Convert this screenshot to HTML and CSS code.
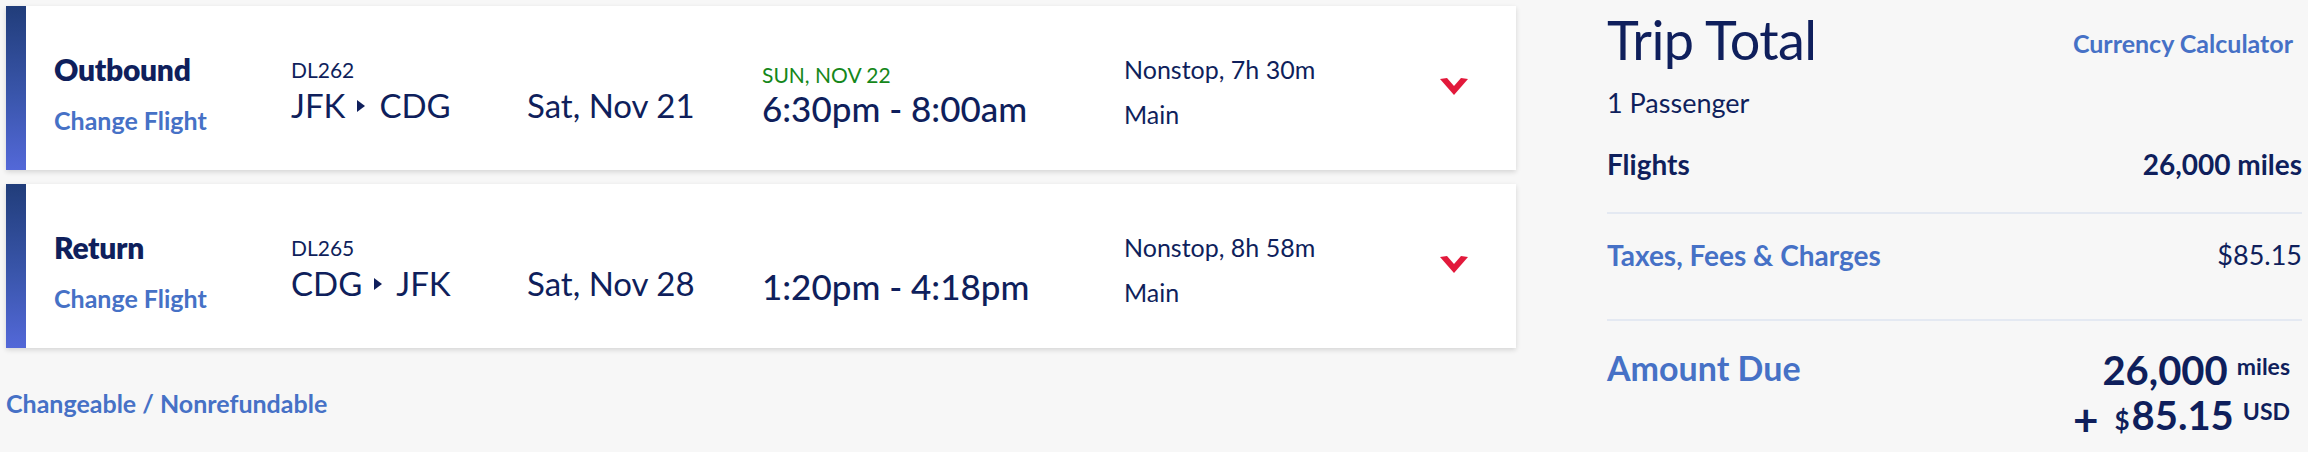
FILE: index.html
```html
<!DOCTYPE html>
<html lang="en">
<head>
<meta charset="utf-8">
<title>Trip Summary</title>
<link rel="stylesheet" href="styles.css">
</head>
<body>
<div class="page">
  <section class="itinerary">
    <article class="leg-card">
      <div class="leg-bar"></div>
      <div class="leg-label">
        <div class="leg-name">Outbound</div>
        <a class="leg-link">Change Flight</a>
      </div>
      <div class="leg-route">
        <div class="flight-no">DL262</div>
        <div class="route">JFK<svg class="route-arrow" width="8" height="12" viewBox="0 0 8 12"><polygon points="0,0 8,6 0,12"/></svg>CDG</div>
      </div>
      <div class="leg-date">
        <div class="date">Sat, Nov 21</div>
      </div>
      <div class="leg-time">
        <div class="arrival-note">SUN, NOV 22</div>
        <div class="time">6:30pm - 8:00am</div>
      </div>
      <div class="leg-info">
        <div class="stops">Nonstop, 7h 30m</div>
        <div class="cabin">Main</div>
      </div>
      <div class="leg-toggle">
        <svg width="28" height="17" viewBox="0 0 28 17"><polygon points="0,1 7,0 14,8 21,0 28,1 14,17"/></svg>
      </div>
    </article>

    <article class="leg-card">
      <div class="leg-bar"></div>
      <div class="leg-label">
        <div class="leg-name">Return</div>
        <a class="leg-link">Change Flight</a>
      </div>
      <div class="leg-route">
        <div class="flight-no">DL265</div>
        <div class="route">CDG<svg class="route-arrow" width="8" height="12" viewBox="0 0 8 12"><polygon points="0,0 8,6 0,12"/></svg>JFK</div>
      </div>
      <div class="leg-date">
        <div class="date">Sat, Nov 28</div>
      </div>
      <div class="leg-time">
        <div class="arrival-note"></div>
        <div class="time">1:20pm - 4:18pm</div>
      </div>
      <div class="leg-info">
        <div class="stops">Nonstop, 8h 58m</div>
        <div class="cabin">Main</div>
      </div>
      <div class="leg-toggle">
        <svg width="28" height="17" viewBox="0 0 28 17"><polygon points="0,1 7,0 14,8 21,0 28,1 14,17"/></svg>
      </div>
    </article>

    <a class="fare-rules">Changeable / Nonrefundable</a>
  </section>

  <aside class="summary">
    <header class="summary-head">
      <h2 class="summary-title">Trip Total</h2>
      <a class="summary-link">Currency Calculator</a>
    </header>
    <div class="passengers">1 Passenger</div>
    <div class="summary-row row-flights">
      <span class="row-label">Flights</span>
      <span class="row-value">26,000 miles</span>
    </div>
    <div class="summary-row row-taxes">
      <span class="row-label">Taxes, Fees &amp; Charges</span>
      <span class="row-value">$85.15</span>
    </div>
    <div class="summary-row row-due">
      <span class="row-label">Amount Due</span>
      <div class="due-value">
        <div class="due-line">26,000<span class="due-unit">miles</span></div>
        <div class="due-line"><span class="due-plus">+</span><span class="due-currency">$</span>85.15<span class="due-unit">USD</span></div>
      </div>
    </div>
  </aside>
</div>
</body>
</html>
```

FILE: styles.css
```css
* {
  box-sizing: border-box;
}

html, body {
  margin: 0;
  padding: 0;
  background: #f7f7f7;
}

body {
  font-family: "Lato", "Noto Sans", sans-serif;
  color: #0f1f5c;
  width: 2308px;
  height: 452px;
  overflow: hidden;
}

a {
  cursor: pointer;
}

.page {
  display: flex;
  padding: 6px;
  gap: 91px;
}

/* ---------- Itinerary ---------- */

.itinerary {
  width: 1510px;
  display: flex;
  flex-direction: column;
  gap: 14px;
}

.leg-card {
  display: grid;
  grid-template-columns: 20px 265px 236px 235px 362px 316px 28px;
  height: 164px;
  background: #ffffff;
  box-shadow: 0 2px 5px rgba(0, 0, 0, 0.14);
}

.leg-bar {
  background: linear-gradient(to bottom, #213d7a 0%, #3a56ac 55%, #5368d8 100%);
}

.leg-label {
  padding-left: 28px;
  padding-top: 45px;
}

.leg-name {
  font-size: 30px;
  line-height: 36px;
  font-weight: 800;
  letter-spacing: -0.3px;
}

.leg-link {
  display: block;
  margin-top: 18px;
  font-size: 25px;
  line-height: 30px;
  font-weight: 700;
  color: #4671c6;
}

.leg-route {
  padding-top: 51px;
}

.flight-no {
  font-size: 21px;
  line-height: 26px;
}

.route {
  margin-top: 2px;
  font-size: 33px;
  line-height: 40px;
  white-space: nowrap;
}

.route-arrow {
  fill: #0f1f5c;
  vertical-align: 6px;
  margin: 0 14px 0 12px;
}

.leg-date {
  padding-top: 79px;
}

.date {
  font-size: 33px;
  line-height: 40px;
  white-space: nowrap;
}

.leg-time {
  padding-top: 56px;
}

.arrival-note {
  height: 26px;
  font-size: 21px;
  line-height: 26px;
  color: #15871a;
}

.time {
  font-size: 35px;
  line-height: 40px;
  font-weight: 500;
  white-space: nowrap;
}

.leg-info {
  padding-top: 48px;
}

.stops {
  font-size: 25px;
  line-height: 30px;
  white-space: nowrap;
}

.cabin {
  margin-top: 15px;
  font-size: 25px;
  line-height: 30px;
}

.leg-toggle {
  padding-top: 72px;
}

.leg-toggle svg {
  display: block;
  fill: #e2193b;
}

.fare-rules {
  display: block;
  margin-top: 26px;
  font-size: 25px;
  line-height: 30px;
  font-weight: 700;
  color: #4671c6;
}

/* ---------- Summary ---------- */

.summary {
  width: 695px;
  padding-top: 4px;
}

.summary-head {
  display: flex;
  justify-content: space-between;
  align-items: flex-start;
}

.summary-title {
  margin: 0;
  font-size: 54px;
  line-height: 60px;
  font-weight: 400;
  letter-spacing: -0.6px;
}

.summary-link {
  margin-top: 18px;
  margin-right: 9px;
  font-size: 25px;
  line-height: 30px;
  font-weight: 700;
  color: #4671c6;
}

.passengers {
  margin-top: 17px;
  font-size: 27px;
  line-height: 32px;
}

.summary-row {
  display: flex;
  justify-content: space-between;
  align-items: flex-start;
}

.row-flights {
  margin-top: 28px;
  padding-bottom: 31px;
  border-bottom: 2px solid #e4e9f2;
}

.row-flights .row-label,
.row-flights .row-value {
  font-size: 28px;
  line-height: 34px;
  font-weight: 700;
}

.row-taxes {
  padding-top: 24px;
  padding-bottom: 47px;
  border-bottom: 2px solid #e4e9f2;
}

.row-taxes .row-label {
  font-size: 28px;
  line-height: 34px;
  font-weight: 700;
  color: #4671c6;
}

.row-taxes .row-value {
  font-size: 27px;
  line-height: 34px;
}

.row-due {
  padding-top: 27px;
}

.row-due .row-label {
  font-size: 34px;
  line-height: 40px;
  font-weight: 700;
  color: #4671c6;
}

.due-value {
  padding-right: 12px;
  text-align: right;
}

.due-line {
  font-size: 40px;
  line-height: 45px;
  font-weight: 700;
  white-space: nowrap;
}

.due-unit {
  display: inline-block;
  margin-left: 9px;
  font-size: 23px;
  line-height: 1;
  vertical-align: 10px;
}

.due-plus {
  display: inline-block;
  margin-right: 16px;
  font-size: 44px;
  line-height: 1;
  vertical-align: -6px;
}

.due-currency {
  font-size: 26px;
  margin-right: 2px;
}
```
